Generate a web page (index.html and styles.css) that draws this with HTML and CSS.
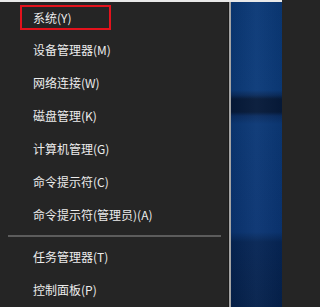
FILE: index.html
```html
<!DOCTYPE html>
<html lang="zh-CN">
<head>
<meta charset="utf-8">
<title>Win+X 菜单</title>
<link rel="stylesheet" href="styles.css">
</head>
<body>
<div class="topbar"></div>
<div class="screen">
  <nav class="menu">
    <div class="item first"><span class="hl">系统(Y)</span></div>
    <div class="item">设备管理器(M)</div>
    <div class="item">网络连接(W)</div>
    <div class="item">磁盘管理(K)</div>
    <div class="item">计算机管理(G)</div>
    <div class="item">命令提示符(C)</div>
    <div class="item">命令提示符(管理员)(A)</div>
    <div class="sep"></div>
    <div class="item">任务管理器(T)</div>
    <div class="item">控制面板(P)</div>
  </nav>
  <div class="edge"></div>
  <div class="desktop"></div>
</div>
</body>
</html>
```

FILE: styles.css
```css
html, body {
  margin: 0;
  padding: 0;
  width: 282px;
  height: 307px;
  overflow: hidden;
  background: #252525;
}

.topbar {
  height: 2px;
  background: #e9e9e9;
}

.screen {
  display: flex;
  height: 305px;
}

.menu {
  width: 228px;
  background: #252525;
  border-right: 1px solid #1b1b1b;
  font-family: "Noto Sans CJK SC", "Microsoft YaHei", sans-serif;
  font-size: 12px;
  color: #ececec;
  display: flex;
  flex-direction: column;
}

.item {
  height: 33px;
  line-height: 33px;
  padding-left: 33px;
  white-space: nowrap;
}

.item.first {
  height: 31px;
  line-height: 31px;
  display: flex;
  align-items: center;
}

.hl {
  box-sizing: border-box;
  width: 91px;
  height: 25px;
  line-height: 21px;
  margin-left: -13px;
  padding-left: 11px;
  border: 2px solid #e3121c;
}

.sep {
  height: 2px;
  margin: 4px 7px 3px 8px;
  background: #5c5c5c;
}

.edge {
  width: 2px;
  background: #a3a3a3;
}

.desktop {
  flex: 1;
  background:
    linear-gradient(90deg, rgba(0,0,0,0.08), rgba(255,255,255,0.03) 50%, rgba(0,0,0,0.06)),
    linear-gradient(180deg,
      #0a3876 0px,
      #0b3a79 88px,
      #0a2c5e 93px,
      #061a3a 97px,
      #061a3a 110px,
      #0a2d62 114px,
      #0b3876 122px,
      #0a3472 230px,
      #062555 240px,
      #05214c 305px);
}
```
